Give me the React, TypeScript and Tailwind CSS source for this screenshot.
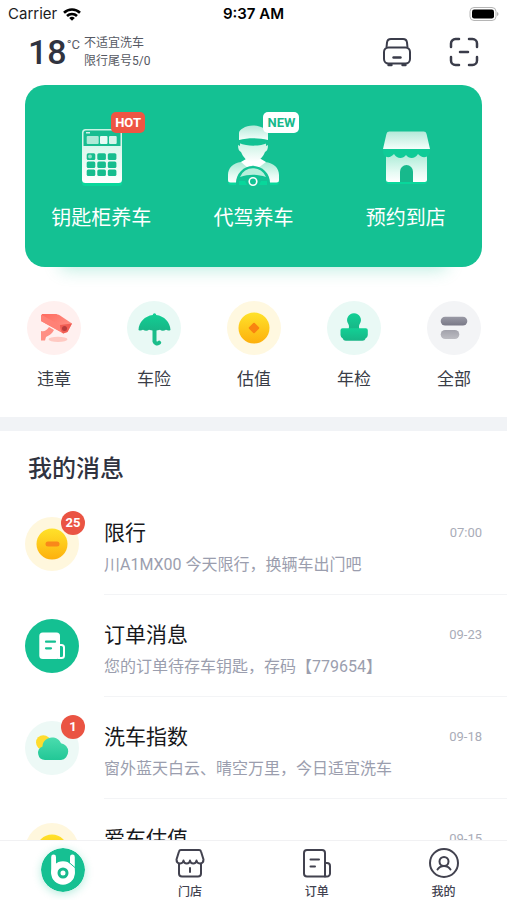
import type { ReactNode } from 'react'
import cx from 'clsx'

interface Entry {
  label: string
  icon: ReactNode
}

interface Service extends Entry {
  tag?: 'HOT' | 'NEW'
}

interface Shortcut extends Entry {
  tint: string
}

interface Message {
  title: string
  body?: string
  time: string
  tint: string
  icon: ReactNode
  unread?: number
}

// Shared gradients, referenced by id from every icon below
function Gradients() {
  return (
    <svg className="absolute h-0 w-0" aria-hidden="true">
      <defs>
        <linearGradient id="mint" x1="0" y1="0" x2="0" y2="1">
          <stop offset="0" stopColor="#c9f3e4" />
          <stop offset="1" stopColor="#ffffff" />
        </linearGradient>
        <linearGradient id="mint-down" x1="0" y1="0" x2="0" y2="1">
          <stop offset="0" stopColor="#ffffff" />
          <stop offset="1" stopColor="#a9ecd5" />
        </linearGradient>
        <linearGradient id="mint-up" x1="0" y1="0" x2="0" y2="1">
          <stop offset="0" stopColor="#9fe8d0" />
          <stop offset="0.7" stopColor="#e6fbf4" />
          <stop offset="1" stopColor="#ffffff" />
        </linearGradient>
        <linearGradient id="roof" x1="0" y1="0" x2="0" y2="1">
          <stop offset="0" stopColor="#b4e9d9" />
          <stop offset="1" stopColor="#f4fffb" />
        </linearGradient>
        <linearGradient id="green" x1="0" y1="0" x2="0" y2="1">
          <stop offset="0" stopColor="#12d095" />
          <stop offset="1" stopColor="#18b586" />
        </linearGradient>
        <linearGradient id="cloud" x1="0" y1="0" x2="0" y2="1">
          <stop offset="0" stopColor="#4bdcae" />
          <stop offset="1" stopColor="#22c796" />
        </linearGradient>
        <linearGradient id="gold" x1="0" y1="0" x2="0" y2="1">
          <stop offset="0" stopColor="#ffe22a" />
          <stop offset="1" stopColor="#fdb00d" />
        </linearGradient>
        <linearGradient id="coral" x1="0" y1="0" x2="1" y2="1">
          <stop offset="0" stopColor="#ff6a5e" />
          <stop offset="1" stopColor="#ff9b8f" />
        </linearGradient>
        <linearGradient id="slate" x1="0" y1="0" x2="0" y2="1">
          <stop offset="0" stopColor="#9a9aa6" />
          <stop offset="1" stopColor="#797987" />
        </linearGradient>
        <linearGradient id="silver" x1="0" y1="0" x2="0" y2="1">
          <stop offset="0" stopColor="#a2a2ab" />
          <stop offset="1" stopColor="#bcbcc2" />
        </linearGradient>
      </defs>
    </svg>
  )
}

function ServiceIcon({ children }: { children: ReactNode }) {
  return (
    <svg viewBox="0 0 64 64" className="h-16 w-16" fill="none" aria-hidden="true">
      {children}
    </svg>
  )
}

function RoundIcon({ children }: { children: ReactNode }) {
  return (
    <svg viewBox="0 0 54 54" className="h-full w-full" fill="none" aria-hidden="true">
      {children}
    </svg>
  )
}

function NavIcon({ children }: { children: ReactNode }) {
  return (
    <svg
      viewBox="0 0 30 30"
      className="h-[30px] w-[30px]"
      fill="none"
      stroke="#42424f"
      strokeWidth="2"
      strokeLinecap="round"
      strokeLinejoin="round"
      aria-hidden="true"
    >
      {children}
    </svg>
  )
}

const services: Service[] = [
  {
    label: '钥匙柜养车',
    tag: 'HOT',
    icon: (
      <ServiceIcon>
        <path d="M13 56h40v3a3 3 0 0 1-3 3H16a3 3 0 0 1-3-3z" fill="#08d79b" />
        <rect x="13" y="5" width="40" height="54" rx="3.5" fill="url(#mint)" />
        <path d="M14.5 22V9a2.500 2.500 0 0 1 2.500-2.500h32a2.500 2.500 0 0 1 2.500 2.500v13z" fill="#18bd90" />
        <path d="M17 8.800h4" stroke="#fff" strokeWidth="1.200" />
        <rect x="17.700" y="12" width="12" height="8" rx="1" fill="#aeead7" />
        <rect x="31" y="12" width="7.500" height="8" rx="1" fill="#e9fbf5" />
        <rect x="40" y="12" width="7.700" height="8" rx="1" fill="#d5f5ea" />
        {[29.3, 37.5, 45.5].map(y =>
          [17.7, 28.3, 38.8].map(x => (
            <rect key={`${x}-${y}`} x={x} y={y} width="8.600" height="6.600" rx="1.500" fill="#16bd8e" />
          )),
        )}
        <circle cx="21" cy="32.600" r="2" fill="#8fe0c7" />
      </ServiceIcon>
    ),
  },
  {
    label: '代驾养车',
    tag: 'NEW',
    icon: (
      <ServiceIcon>
        <path d="M7 56h51v2a3 3 0 0 1-3 3H10a3 3 0 0 1-3-3z" fill="#08d79b" />
        <path d="M25 36h14l5 2c9 1 14 6 14 13v5a2.500 2.500 0 0 1-2.500 2.500h-46A2.500 2.500 0 0 1 7 56v-5c0-7 5-12 13-13z" fill="url(#mint-up)" />
        <path d="M25 35l-5 3 7 6 5-3 5 3 8-6-5-3z" fill="#fff" />
        <path d="M19 19h26v3l2-1c0 4-1 6-3 7-2 5-6 10-12 10s-10-5-12-10c-2-1-3-3-3-7l2 1z" fill="url(#mint)" />
        <path d="M18 16c9 3 20 3 29 0v3c-9 3.500-20 3.500-29 0z" fill="#12c294" />
        <path d="M18 16V9c0-3 6-7.500 14-7.500S47 6 47 9v7c-9-2.500-20-2.500-29 0z" fill="url(#roof)" />
        <path d="M15 59a17 17 0 0 1 34 0v2H15z" fill="#12c294" />
        <path d="M19 53a14 14 0 0 1 26 0c-9-3-17-3-26 0z" fill="#b7efdc" />
        <path d="M18 57h6l2 4h-8zM46 57h-6l-2 4h8z" fill="#08d79b" />
        <circle cx="32" cy="57.500" r="3.800" fill="#12c294" stroke="#fff" strokeWidth="1.600" />
      </ServiceIcon>
    ),
  },
  {
    label: '预约到店',
    icon: (
      <ServiceIcon>
        <path d="M12 55h41v2a3 3 0 0 1-3 3H15a3 3 0 0 1-3-3z" fill="#08d79b" />
        <path d="M12 26h41v29.500a2.500 2.500 0 0 1-2.500 2.500h-36a2.500 2.500 0 0 1-2.500-2.500z" fill="url(#mint-up)" />
        <path d="M26 58V47.500a6.500 6.500 0 0 1 13 0V58z" fill="#17b98c" />
        <path d="M9 25h47v2c0 7-8 8-12 3-3 5-9 5-12 1-3 4-9 4-12-1-4 5-11 4-11-3z" fill="#0fcb97" />
        <path d="M15.500 7.500h34a3 3 0 0 1 3 2.300L56 25H9l3.500-15.200a3 3 0 0 1 3-2.300z" fill="url(#roof)" />
      </ServiceIcon>
    ),
  },
]

const coin = <circle cx="27" cy="27" r="15.500" fill="url(#gold)" />

const shortcuts: Shortcut[] = [
  {
    label: '违章',
    tint: 'bg-[#fff0ef]',
    icon: (
      <RoundIcon>
        <ellipse cx="31" cy="38.300" rx="9.500" ry="2.600" fill="#ffc9c2" />
        <path d="M14 30c3 1 5 0 8-4l5 3c-2 4-6 6-8 7l-1 3.500h-4z" fill="#ff8f84" />
        <path d="M15 13h13c2 0 3 .5 5 1.500l12 8-4.500 8.500-4 1.500L14 20z" fill="url(#coral)" />
        <path d="M14 20v-6.500l19 10.500 3.500 8.500z" fill="#ff8176" />
        <path d="M33 24l12-1.500-4.500 8.500-4.500 1.500c-2-2-3-5-3-8.500z" fill="#f05d53" />
        <circle cx="37.500" cy="27.500" r="2.500" fill="#b83d3c" />
      </RoundIcon>
    ),
  },
  {
    label: '车险',
    tint: 'bg-[#e9f9f5]',
    icon: (
      <RoundIcon>
        <path d="M27.500 25v15.500a2.800 2.800 0 0 0 4.700 1.200" stroke="#1bbd8a" strokeWidth="4" strokeLinecap="round" />
        <path d="M27.500 12.300c1 0 1.500.7 1.700 1.700 8 1 14 7 14.300 15-1.500 .8-3 .6-4.500-.3-2 1.300-4.500 1.300-6 0-2 1-9 1-11 0-1.500 1.300-4 1.300-6 0-1.500 .9-3 1.100-4.500.3.300-8 6.300-14 14.300-15 .2-1 .7-1.700 1.700-1.700z" fill="url(#green)" />
      </RoundIcon>
    ),
  },
  {
    label: '估值',
    tint: 'bg-[#fff8e0]',
    icon: (
      <RoundIcon>
        {coin}
        <rect x="23" y="23" width="8" height="8" rx="1" transform="rotate(45 27 27)" fill="#f98410" />
      </RoundIcon>
    ),
  },
  {
    label: '年检',
    tint: 'bg-[#e9f9f5]',
    icon: (
      <RoundIcon>
        <path d="M27 12.300a6.800 6.800 0 0 1 5.800 10.500c-1 1.700-1 3-.3 6.200H21.500c.7-3.200.7-4.500-.3-6.200A6.800 6.800 0 0 1 27 12.300z" fill="url(#green)" />
        <path d="M15.500 27.300h23.300a2 2 0 0 1 2 2V34a4 4 0 0 1-2.300 3.500c-.5 1.500-1.500 2.200-3 2.200H18.800c-1.500 0-2.500-.7-3-2.200A4 4 0 0 1 13.500 34v-4.700a2 2 0 0 1 2-2z" fill="url(#green)" />
      </RoundIcon>
    ),
  },
  {
    label: '全部',
    tint: 'bg-[#f3f4f6]',
    icon: (
      <RoundIcon>
        <rect x="13.700" y="15.700" width="26.600" height="8.800" rx="4.400" fill="url(#slate)" />
        <rect x="13.700" y="29" width="18.600" height="9" rx="4.500" fill="url(#silver)" />
      </RoundIcon>
    ),
  },
]

const messages: Message[] = [
  {
    title: '限行',
    body: '川A1MX00 今天限行，换辆车出门吧',
    time: '07:00',
    tint: 'bg-[#fff7dd]',
    unread: 25,
    icon: (
      <RoundIcon>
        {coin}
        <rect x="20.500" y="24.500" width="14" height="5" rx="2.500" fill="#f9881a" />
      </RoundIcon>
    ),
  },
  {
    title: '订单消息',
    body: '您的订单待存车钥匙，存码【779654】',
    time: '09-23',
    tint: 'bg-[#14c092]',
    icon: (
      <RoundIcon>
        <rect x="14.300" y="13.500" width="20.700" height="26.500" rx="3.500" fill="#fff" />
        <path d="M34 26h2.500a2.500 2.500 0 0 1 2.500 2.500v8a2.500 2.500 0 0 1-2.500 2.500H34z" fill="#14c092" stroke="#fff" strokeWidth="2" />
        <path d="M21 22.700h9M21 29.300h5" stroke="#14c092" strokeWidth="2.200" strokeLinecap="round" />
      </RoundIcon>
    ),
  },
  {
    title: '洗车指数',
    body: '窗外蓝天白云、晴空万里，今日适宜洗车',
    time: '09-18',
    tint: 'bg-[#edf9f6]',
    unread: 1,
    icon: (
      <RoundIcon>
        <circle cx="18.300" cy="21.500" r="7.300" fill="#ffdc2e" />
        <path d="M20 39a7 7 0 0 1-2.500-13.500C17.500 20 22 16.500 27 16.500c4 0 7.500 2 9 5.700A8.500 8.500 0 0 1 36 39z" fill="url(#cloud)" />
      </RoundIcon>
    ),
  },
  {
    title: '爱车估值',
    time: '09-15',
    tint: 'bg-[#fff7dd]',
    icon: <RoundIcon>{coin}</RoundIcon>,
  },
]

const tabs: Entry[] = [
  {
    label: '门店',
    icon: (
      <NavIcon>
        <path d="M6 2h18a2 2 0 0 1 2 1.500l2.500 8c0 5-6.500 5-7 1-.5 4-6 4-6.500 0-.5 4-6 4-6.500 0-.5 4-7 4-7-1l2.500-8A2 2 0 0 1 6 2z" />
        <path d="M4 16v9.500a3 3 0 0 0 3 3h16a3 3 0 0 0 3-3V16M15 20v4" />
      </NavIcon>
    ),
  },
  {
    label: '订单',
    icon: (
      <NavIcon>
        <path d="M23 28.500H5a3 3 0 0 1-3-3V5a3 3 0 0 1 3-3h15a3 3 0 0 1 3 3z" />
        <path d="M23 15h2a3 3 0 0 1 3 3v7.500a3 3 0 0 1-3 3h-2M8.500 11.500h8.500M8.500 18.500H13" />
      </NavIcon>
    ),
  },
  {
    label: '我的',
    icon: (
      <NavIcon>
        <circle cx="15" cy="15" r="14" />
        <circle cx="15" cy="13.500" r="4.500" />
        <path d="M8.500 21.500c1.500-2.300 3.500-3.500 6.500-3.500s5 1.200 6.500 3.500" />
      </NavIcon>
    ),
  },
]

function StatusBar() {
  return (
    <div className="grid h-7 grid-cols-3 items-center px-2 font-[Inter,sans-serif] text-[15px] text-[#1c1c1e]">
      <div className="flex items-center gap-1.5">
        <span>Carrier</span>
        <svg viewBox="0 0 18 13" className="h-[13px] w-[18px]" fill="none" stroke="#000" strokeWidth="2.600" aria-hidden="true">
          <path d="M1 4.800a11.500 11.500 0 0 1 16 0M4 8a7.200 7.200 0 0 1 10 0" />
          <path d="M9 12.800L6.200 10a4 4 0 0 1 5.600 0z" fill="#000" stroke="none" />
        </svg>
      </div>
      <span className="text-center font-semibold text-black">9:37 AM</span>
      <svg viewBox="0 0 30 14" className="h-[14px] w-[30px] justify-self-end" aria-hidden="true">
        <rect x="1" y="0.500" width="26" height="13" rx="4" fill="#fff" stroke="#b5b5b5" />
        <rect x="3" y="2.500" width="22" height="9" rx="2.200" fill="#000" />
        <path d="M28 5v4c2-.8 2-3.200 0-4z" fill="#b5b5b5" />
      </svg>
    </div>
  )
}

function Header() {
  return (
    <header className="flex h-12 items-center justify-between px-7">
      <div className="flex items-center">
        <span className="text-[34px] leading-none font-medium text-[#30333f]">18</span>
        <span className="mb-4 text-[13px] leading-none text-[#5b5e69]">°C</span>
        <div className="ml-1 text-[12px] leading-[18px] text-[#555862]">
          <p>不适宜洗车</p>
          <p>限行尾号5/0</p>
        </div>
      </div>
      <div className="flex items-center gap-[37px]">
        <button type="button" aria-label="我的车辆">
          <svg viewBox="0 0 30 30" className="h-[30px] w-[30px]" fill="none" stroke="#3a3c4a" strokeWidth="2" aria-hidden="true">
            <path d="M4.500 10.500l.5-5A4 4 0 0 1 9 2h12a4 4 0 0 1 4 3.500l.5 5" />
            <rect x="2" y="10.500" width="26" height="16" rx="4.500" />
            <path d="M11.500 20.500h7" strokeWidth="2.400" strokeLinecap="round" />
            <path d="M6.500 28h3M20.500 28h3" strokeWidth="2.400" strokeLinecap="round" />
          </svg>
        </button>
        <button type="button" aria-label="扫一扫">
          <svg viewBox="0 0 30 30" className="h-[30px] w-[30px]" fill="none" stroke="#3a3c4a" strokeWidth="2.500" strokeLinecap="round" aria-hidden="true">
            <path d="M2 10V6.500A4.500 4.500 0 0 1 6.500 2H10M20 2h3.500A4.500 4.500 0 0 1 28 6.500V10M28 20v3.500a4.500 4.500 0 0 1-4.500 4.500H20M10 28H6.500A4.500 4.500 0 0 1 2 23.500V20M11 15h8" />
          </svg>
        </button>
      </div>
    </header>
  )
}

function ServiceCard() {
  return (
    <section
      className={cx(
        'mx-[25px] mt-[9px] grid grid-cols-3 rounded-[20px] bg-[#14c193] pt-[39px] pb-[35px]',
        'shadow-[0_38px_16px_-36px_rgba(20,193,147,0.3)]',
      )}
    >
      {services.map(({ label, tag, icon }) => (
        <button key={label} type="button" className="flex flex-col items-center gap-4">
          <span className="relative">
            {icon}
            {tag && (
              <span
                className={cx(
                  'absolute -top-3 left-[42px] rounded-[5px] px-1 text-[13px] leading-[21px] font-bold',
                  tag === 'HOT' ? 'bg-[#ee5543] text-white' : 'bg-white text-[#17b98c]',
                )}
              >
                {tag}
              </span>
            )}
          </span>
          <span className="text-[20px] leading-7 text-white">{label}</span>
        </button>
      ))}
    </section>
  )
}

function Shortcuts() {
  return (
    <section className="mt-[34px] grid grid-cols-5 pr-[3px] pb-[26px] pl-1">
      {shortcuts.map(({ label, tint, icon }) => (
        <button key={label} type="button" className="flex flex-col items-center gap-3">
          <span className={cx('h-[54px] w-[54px] rounded-full', tint)}>{icon}</span>
          <span className="text-[17px] leading-6 text-[#3a3d47]">{label}</span>
        </button>
      ))}
    </section>
  )
}

function MessageRow({ title, body, time, tint, icon, unread }: Message) {
  return (
    <li>
      <a href="#message" className="flex h-[102px] gap-[25px] pl-[25px]">
        <span className={cx('relative mt-6 h-[54px] w-[54px] shrink-0 rounded-full', tint)}>
          {icon}
          {unread && (
            <span
              className={cx(
                'absolute -top-1.5 left-9 h-6 w-6 rounded-full bg-[#ea5443]',
                'text-center text-[13px] leading-6 font-bold text-white',
              )}
            >
              {unread}
            </span>
          )}
        </span>
        <div className="min-w-0 flex-1 border-b border-[#f3f4f6] pt-6 pr-[25px]">
          <div className="flex items-center justify-between">
            <h3 className="text-[21px] leading-8 text-[#17181c]">{title}</h3>
            <time className="text-[13px] text-[#a9acb8]">{time}</time>
          </div>
          {body && <p className="mt-1 truncate text-[16px] leading-6 text-[#9b9eae]">{body}</p>}
        </div>
      </a>
    </li>
  )
}

function TabBar() {
  return (
    <nav className="grid h-[60px] shrink-0 grid-cols-4 border-t border-[#f1f1f3] bg-white">
      <a href="#home" aria-label="首页" className="flex items-start justify-center pt-[7px]">
        <svg
          viewBox="0 0 44 44"
          className="h-11 w-11 rounded-full shadow-[0_2px_8px_rgba(20,193,147,0.3)]"
          fill="none"
          aria-hidden="true"
        >
          <circle cx="22" cy="22" r="22" fill="#16c092" />
          <path d="M12.600 9v16M31.400 9v16" stroke="#fff" strokeWidth="4.800" strokeLinecap="round" />
          <circle cx="22" cy="25" r="11.800" fill="#fff" />
          <path d="M27.500 14l7 6" stroke="#16c092" strokeWidth="1" />
          <circle cx="22" cy="25" r="4" stroke="#16b98c" strokeWidth="3" />
        </svg>
      </a>
      {tabs.map(({ label, icon }) => (
        <a key={label} href="#tab" className="flex flex-col items-center gap-1.5 pt-[7px]">
          {icon}
          <span className="text-[12px] leading-4 font-medium text-[#42424f]">{label}</span>
        </a>
      ))}
    </nav>
  )
}

export default function App() {
  return (
    <div className="flex h-screen flex-col bg-white font-[Roboto,'Noto_Sans_CJK_SC',sans-serif]">
      <Gradients />
      <main className="min-h-0 flex-1 overflow-y-auto [scrollbar-width:none]">
        <StatusBar />
        <Header />
        <ServiceCard />
        <Shortcuts />
        <div className="h-3.5 bg-[#f1f3f6]" />

        <section className="pt-5">
          <h2 className="px-7 text-[24px] leading-9 font-medium text-[#30333f]">我的消息</h2>
          <ul className="mt-1.5">
            {messages.map(message => (
              <MessageRow key={message.title} {...message} />
            ))}
          </ul>
        </section>
      </main>
      <TabBar />
    </div>
  )
}
